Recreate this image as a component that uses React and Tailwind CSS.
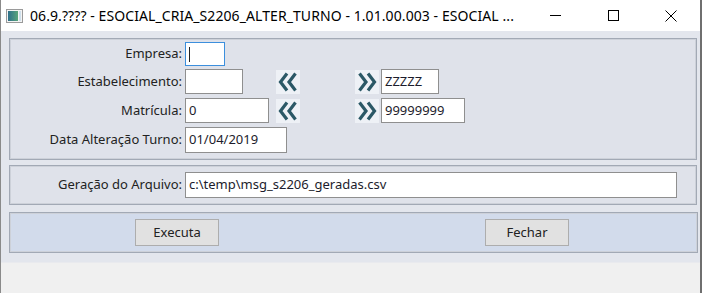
import React from 'react';

const font = { fontFamily: '"Noto Sans", "Open Sans", sans-serif' };

const Chevrons = ({ dir }) => (
  <div className="w-[24px] h-[24px] bg-[#eef1f6] flex items-center justify-center">
    <svg width="22" height="22" viewBox="0 0 22 22">
      <g
        fill="none"
        stroke="#2b5866"
        strokeWidth="3.2"
        strokeLinejoin="miter"
        transform={dir === 'right' ? 'translate(22 0) scale(-1 1)' : undefined}
      >
        <polyline points="10,2.5 3.5,11 10,19.5" />
        <polyline points="18.5,2.5 12,11 18.5,19.5" />
      </g>
    </svg>
  </div>
);

const Field = ({ width, value, focused }) => (
  <div
    className={`h-full ${width} bg-white border flex items-center px-[3px] text-[13px] text-[#1c1c2c] whitespace-nowrap ${
      focused ? 'border-[#3c8fdd]' : 'border-[#8f8f8f]'
    }`}
  >
    {focused ? <span className="w-px h-[15px] bg-[#222]" /> : value}
  </div>
);

const Label = ({ children }) => (
  <div className="w-[175px] pr-[3px] text-right text-[13px] text-[#222] shrink-0 whitespace-nowrap">
    {children}
  </div>
);

const Panel = ({ className, children }) => (
  <div className={`border border-[#a2a9b5] shadow-[inset_0_0_0_1px_#cdd1d9] ${className}`}>
    {children}
  </div>
);

export default function App() {
  return (
    <div
      className="w-[702px] h-[293px] bg-[#f0f0f0] border-l border-r-2 border-l-[#8a8a8a] border-r-[#6f6f6f] flex flex-col overflow-hidden"
      style={font}
    >
      {/* title bar */}
      <div className="h-[31px] bg-white flex items-center shrink-0">
        <div className="ml-[5px] w-[17px] h-[14px] border border-[#9a9a9a] bg-[#f4f4f4] flex p-[1px] gap-[1px]">
          <div className="flex-1 bg-gradient-to-r from-[#2e6f8a] to-[#5aa57a]" />
          <div className="w-[2px] bg-[#cfe0ec]" />
        </div>
        <div className="ml-[7px] text-[14px] tracking-[0.08px] text-black whitespace-nowrap">
          06.9.???? - ESOCIAL_CRIA_S2206_ALTER_TURNO - 1.01.00.003 - ESOCIAL ...
        </div>
        <div className="ml-auto flex items-center h-full">
          <div className="w-[58px] h-full flex items-center justify-center">
            <div className="w-[11px] h-px bg-black" />
          </div>
          <div className="w-[58px] h-full flex items-center justify-center">
            <div className="w-[11px] h-[11px] border border-black" />
          </div>
          <div className="w-[58px] h-full flex items-center justify-center">
            <svg width="12" height="12" viewBox="0 0 12 12">
              <path d="M0.5 0.5 L11.5 11.5 M11.5 0.5 L0.5 11.5" stroke="#000" strokeWidth="1" />
            </svg>
          </div>
        </div>
      </div>

      {/* client */}
      <div className="h-[231px] bg-[#e3e6ed] pl-[8px] pr-[3px] pt-[7px] flex flex-col shrink-0">
        <Panel className="h-[122px] bg-[#dfe2ea] pt-[3px] flex flex-col">
          <div className="h-[24px] flex items-center">
            <Label>Empresa:</Label>
            <div className="h-full w-[91px]">
              <Field width="w-[40px]" focused />
            </div>
          </div>
          <div className="h-[25px] mt-[3px] flex items-center">
            <Label>Estabelecimento:</Label>
            <div className="h-full w-[91px]">
              <Field width="w-[58px]" />
            </div>
            <Chevrons dir="left" />
            <div className="w-[55px]" />
            <Chevrons dir="right" />
            <div className="h-full ml-[2px]">
              <Field width="w-[58px]" value="ZZZZZ" />
            </div>
          </div>
          <div className="h-[25px] mt-[4px] flex items-center">
            <Label>Matrícula:</Label>
            <div className="h-full w-[91px]">
              <Field width="w-[84px]" value="0" />
            </div>
            <Chevrons dir="left" />
            <div className="w-[55px]" />
            <Chevrons dir="right" />
            <div className="h-full ml-[2px]">
              <Field width="w-[84px]" value="99999999" />
            </div>
          </div>
          <div className="h-[26px] mt-[4px] flex items-center">
            <Label>Data Alteração Turno:</Label>
            <div className="h-full">
              <Field width="w-[102px]" value="01/04/2019" />
            </div>
          </div>
        </Panel>

        <Panel className="h-[40px] mt-[5px] bg-[#dfe2ea] flex items-center">
          <Label>Geração do Arquivo:</Label>
          <div className="h-[26px] flex-1 mr-[19px]">
            <Field width="w-full" value="c:\temp\msg_s2206_geradas.csv" />
          </div>
        </Panel>

        <Panel className="h-[41px] mt-[7px] -mr-[1px] bg-[#d2dbeb] flex items-center">
          <button className="ml-[125px] w-[84px] h-[27px] bg-[#e1e1e1] border border-[#adadad] text-[13px] text-[#222]">
            Executa
          </button>
          <button className="ml-[266px] w-[84px] h-[27px] bg-[#e1e1e1] border border-[#adadad] text-[13px] text-[#222]">
            Fechar
          </button>
        </Panel>
      </div>
      <div className="h-px bg-[#e9eaee]" />
    </div>
  );
}
